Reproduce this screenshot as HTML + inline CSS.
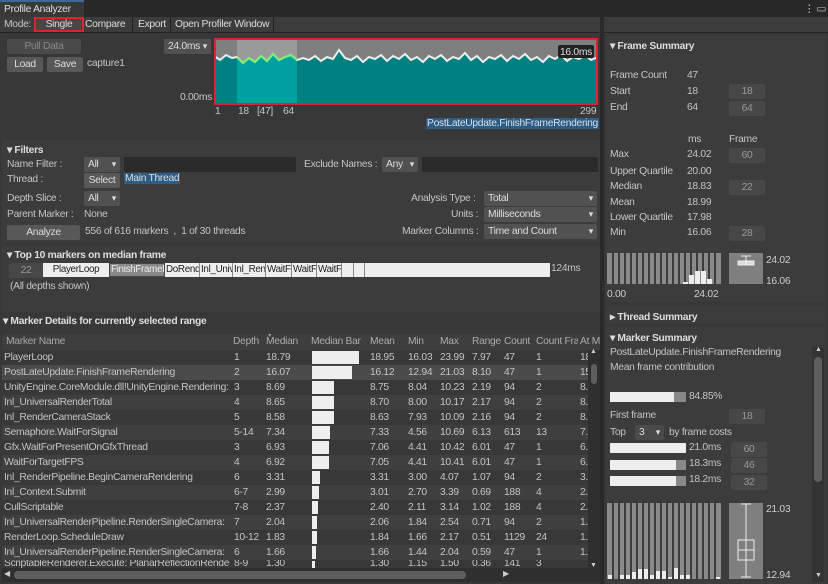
<!DOCTYPE html>
<html><head><meta charset="utf-8"><style>
*{box-sizing:border-box;margin:0;padding:0}
body{width:828px;height:584px;overflow:hidden;background:#383838;font-family:"Liberation Sans",sans-serif;font-size:10.3px;letter-spacing:-0.3px;color:#c4c4c4;position:relative}
.a{position:absolute;white-space:nowrap}
.btn{position:absolute;background:#585858;color:#ddd;text-align:center;border-radius:2px;line-height:15px;height:15px}
.fld{position:absolute;background:#474747;color:#999;text-align:center;border-radius:2px;height:15px;line-height:15px}
.dd{position:absolute;background:#515151;color:#ddd;border-radius:2px;height:15px;line-height:15px;padding-left:4px}
.dd:after{content:"▾";position:absolute;right:4px;font-size:9px}
.inp{position:absolute;background:#2a2a2a;height:15px;border-radius:2px}
.hd{position:absolute;font-weight:bold;color:#ddd}
.row{position:absolute;left:2px;width:586px;height:15px;line-height:15px;overflow:hidden}
.row span{position:absolute}
.bar{position:absolute;background:#eee;height:13px;top:1px}
</style></head><body>
<div class="a" style="left:0;top:0;width:828px;height:17px;background:#282828"></div>
<div class="a" style="left:0;top:2px;width:84px;height:15px;background:#383838;padding-left:4px;line-height:15px;color:#ddd">Profile Analyzer</div>
<div class="a" style="left:0;top:0;width:84px;height:2px;background:#3a6a9a"></div>
<div class="a" style="left:804px;top:3px;color:#ccc">⋮ ▭ ✕</div>
<div class="a" style="left:0;top:17px;width:828px;height:16px;background:#3c3c3c;border-bottom:1px solid #232323"></div>
<div class="a" style="left:4px;top:19px">Mode:</div>
<div class="a" style="left:34px;top:17px;width:50px;height:15px;background:#464646;border:2px solid #e0222a;text-align:center;line-height:11px;color:#ddd">Single</div>
<div class="a" style="left:85px;top:19px;color:#ddd">Compare</div>
<div class="a" style="left:132px;top:17px;width:1px;height:16px;background:#222"></div>
<div class="a" style="left:138px;top:19px;color:#ddd">Export</div>
<div class="a" style="left:170px;top:17px;width:1px;height:16px;background:#222"></div>
<div class="a" style="left:175px;top:19px;color:#ddd">Open Profiler Window</div>
<div class="a" style="left:273px;top:17px;width:1px;height:16px;background:#222"></div>

<div class="btn" style="left:7px;top:39px;width:74px;background:#4a4a4a;color:#888">Pull Data</div>
<div class="btn" style="left:7px;top:57px;width:36px">Load</div>
<div class="btn" style="left:47px;top:57px;width:36px">Save</div>
<div class="a" style="left:87px;top:58px">capture1</div>
<div class="dd" style="left:164px;top:39px;width:47px">24.0ms</div>
<div class="a" style="left:180px;top:92px">0.00ms</div>
<svg class="a" style="left:214px;top:38px" width="384" height="67">
<rect x="0" y="0" width="384" height="67" fill="#008080"/>
<rect x="0" y="0" width="384" height="26" fill="#7f7f7f"/>
<rect x="23" y="0" width="60" height="67" fill="#00a0a0"/>
<rect x="23" y="0" width="60" height="26" fill="#9a9a9a"/>
<polyline fill="#008080" stroke="none" points="0,67 0,18 6,22 12,17 18,20 23,19 29,25 35,20 41,24 47,18 53,23 59,16 65,22 71,19 77,17 83,22 89,20 95,22 101,18 107,23 113,19 119,21 125,12 131,20 137,22 143,18 149,24 155,19 161,21 167,17 173,23 179,18 185,21 191,16 197,22 203,19 209,24 215,18 221,21 227,17 233,23 239,19 245,21 251,15 257,22 263,18 269,24 275,19 281,21 287,17 293,23 299,18 305,21 311,16 317,22 323,19 329,24 335,18 341,21 347,17 353,23 359,19 365,21 371,17 377,22 384,19 384,67"/>
<polygon fill="#00a0a0" points="23,67 23,19 29,25 35,20 41,24 47,18 53,23 59,16 65,22 71,19 77,17 83,22 83,67"/>
<polyline fill="none" stroke="#eee" stroke-width="2" points="0,18 6,22 12,17 18,20 23,19 29,25 35,20 41,24 47,18 53,23 59,16 65,22 71,19 77,17 83,22 89,20 95,22 101,18 107,23 113,19 119,21 125,12 131,20 137,22 143,18 149,24 155,19 161,21 167,17 173,23 179,18 185,21 191,16 197,22 203,19 209,24 215,18 221,21 227,17 233,23 239,19 245,21 251,15 257,22 263,18 269,24 275,19 281,21 287,17 293,23 299,18 305,21 311,16 317,22 323,19 329,24 335,18 341,21 347,17 353,23 359,19 365,21 371,17 377,22 384,19"/>
<polyline fill="none" stroke="#7cf070" stroke-width="2" points="23,19 29,25 35,20 41,24 47,18 53,23 59,16 65,22 71,19 77,17 83,22"/>
<rect x="1" y="1" width="382" height="65" fill="none" stroke="#e0222a" stroke-width="2"/>
<rect x="344" y="7" width="36" height="13" fill="#222" rx="2"/>
<text x="346" y="17" fill="#ddd" font-size="10.3" font-family="Liberation Sans">16.0ms</text>
</svg>
<div class="a" style="left:215px;top:106px">1</div>
<div class="a" style="left:238px;top:106px">18</div>
<div class="a" style="left:257px;top:106px">[47]</div>
<div class="a" style="left:283px;top:106px">64</div>
<div class="a" style="left:580px;top:106px">299</div>
<div class="a" style="left:426px;top:118px;background:#2c5d87;color:#ddd;padding:0 1px">PostLateUpdate.FinishFrameRendering</div>

<div class="a" style="left:2px;top:140px;width:598px;height:102px;background:#3c3c3c"></div>
<div class="hd" style="left:7px;top:144px">▾ Filters</div>
<div class="a" style="left:7px;top:159px">Name Filter :</div>
<div class="dd" style="left:84px;top:157px;width:36px">All</div>
<div class="inp" style="left:124px;top:157px;width:172px"></div>
<div class="a" style="left:304px;top:159px">Exclude Names :</div>
<div class="dd" style="left:382px;top:157px;width:36px">Any</div>
<div class="inp" style="left:422px;top:157px;width:176px"></div>
<div class="a" style="left:7px;top:174px">Thread :</div>
<div class="btn" style="left:84px;top:173px;width:36px">Select</div>
<div class="a" style="left:124px;top:173px;background:#2c5d87;color:#ddd;padding:0 1px">Main Thread</div>
<div class="a" style="left:7px;top:193px">Depth Slice :</div>
<div class="dd" style="left:84px;top:191px;width:36px">All</div>
<div class="a" style="left:411px;top:193px">Analysis Type :</div>
<div class="dd" style="left:484px;top:191px;width:113px">Total</div>
<div class="a" style="left:7px;top:209px">Parent Marker :</div>
<div class="a" style="left:84px;top:209px">None</div>
<div class="a" style="left:451px;top:209px">Units :</div>
<div class="dd" style="left:484px;top:207px;width:113px">Milliseconds</div>
<div class="btn" style="left:7px;top:225px;width:73px">Analyze</div>
<div class="a" style="left:85px;top:226px">556 of 616 markers &nbsp;, &nbsp;1 of 30 threads</div>
<div class="a" style="left:402px;top:226px">Marker Columns :</div>
<div class="dd" style="left:484px;top:224px;width:113px">Time and Count</div>

<div class="a" style="left:2px;top:246px;width:598px;height:66px;background:#3c3c3c"></div>
<div class="hd" style="left:7px;top:249px">▾ Top 10 markers on median frame</div>
<div class="fld" style="left:9px;top:263px;width:34px">22</div>
<div class="a" style="left:43px;top:263px;width:507px;height:14px;background:#eee;color:#222;line-height:14px;font-size:9.8px">
<span class="a" style="left:0;width:66px;text-align:center">PlayerLoop</span>
<span class="a" style="left:66px;width:56px;height:14px;background:#888;color:#eee;border:1px solid #444;padding-left:1px;overflow:hidden;line-height:12px">FinishFrameR</span>
<span class="a" style="left:123px;width:34px;overflow:hidden;border-right:1px solid #888">DoRend</span>
<span class="a" style="left:158px;width:32px;overflow:hidden;border-right:1px solid #888">Inl_Univ</span>
<span class="a" style="left:191px;width:32px;overflow:hidden;border-right:1px solid #888">Inl_Ren</span>
<span class="a" style="left:224px;width:25px;overflow:hidden;border-right:1px solid #888">WaitF</span>
<span class="a" style="left:250px;width:24px;overflow:hidden;border-right:1px solid #888">WaitF</span>
<span class="a" style="left:275px;width:24px;overflow:hidden;border-right:1px solid #888">WaitF</span>
<span class="a" style="left:300px;width:11px;border-right:1px solid #888;height:14px"></span>
<span class="a" style="left:312px;width:10px;border-right:1px solid #888;height:14px"></span>
</div>
<div class="a" style="left:551px;top:263px">124ms</div>
<div class="a" style="left:10px;top:281px">(All depths shown)</div>

<div class="hd" style="left:3px;top:315px">▾ Marker Details for currently selected range</div>
<div class="a" style="left:2px;top:331px;width:598px;height:253px;background:#383838"></div>
<div class="a" style="left:2px;top:334px;width:598px;height:16px;background:#3e3e3e;color:#aaa;line-height:16px;overflow:hidden">
<span class="a" style="left:4px">Marker Name</span>
<span class="a" style="left:231px">Depth</span>
<span class="a" style="left:264px">Median</span><span class="a" style="left:266px;top:-6px;font-size:7px">▾</span>
<span class="a" style="left:309px">Median Bar</span>
<span class="a" style="left:368px">Mean</span>
<span class="a" style="left:406px">Min</span>
<span class="a" style="left:438px">Max</span>
<span class="a" style="left:470px">Range</span>
<span class="a" style="left:502px">Count</span>
<span class="a" style="left:534px;width:42px;overflow:hidden">Count Fra</span>
<span class="a" style="left:578px">At M</span>
</div>
<div class="row" style="top:350px;background:#383838"><span style="left:2px">PlayerLoop</span><span style="left:232px">1</span><span style="left:264px">18.79</span><div class="bar" style="left:310px;width:47px"></div><span style="left:368px">18.95</span><span style="left:406px">16.03</span><span style="left:438px">23.99</span><span style="left:470px">7.97</span><span style="left:502px">47</span><span style="left:534px">1</span><span style="left:578px">18</span></div>
<div class="row" style="top:365px;background:#4b4b4b"><span style="left:2px">PostLateUpdate.FinishFrameRendering</span><span style="left:232px">2</span><span style="left:264px">16.07</span><div class="bar" style="left:310px;width:40px"></div><span style="left:368px">16.12</span><span style="left:406px">12.94</span><span style="left:438px">21.03</span><span style="left:470px">8.10</span><span style="left:502px">47</span><span style="left:534px">1</span><span style="left:578px">15</span></div>
<div class="row" style="top:380px;background:#383838"><span style="left:2px;width:228px;overflow:hidden">UnityEngine.CoreModule.dll!UnityEngine.Rendering:</span><span style="left:232px">3</span><span style="left:264px">8.69</span><div class="bar" style="left:310px;width:22px"></div><span style="left:368px">8.75</span><span style="left:406px">8.04</span><span style="left:438px">10.23</span><span style="left:470px">2.19</span><span style="left:502px">94</span><span style="left:534px">2</span><span style="left:578px">8.</span></div>
<div class="row" style="top:395px;background:#3f3f3f"><span style="left:2px">Inl_UniversalRenderTotal</span><span style="left:232px">4</span><span style="left:264px">8.65</span><div class="bar" style="left:310px;width:22px"></div><span style="left:368px">8.70</span><span style="left:406px">8.00</span><span style="left:438px">10.17</span><span style="left:470px">2.17</span><span style="left:502px">94</span><span style="left:534px">2</span><span style="left:578px">8.</span></div>
<div class="row" style="top:410px;background:#383838"><span style="left:2px">Inl_RenderCameraStack</span><span style="left:232px">5</span><span style="left:264px">8.58</span><div class="bar" style="left:310px;width:22px"></div><span style="left:368px">8.63</span><span style="left:406px">7.93</span><span style="left:438px">10.09</span><span style="left:470px">2.16</span><span style="left:502px">94</span><span style="left:534px">2</span><span style="left:578px">8.</span></div>
<div class="row" style="top:425px;background:#3f3f3f"><span style="left:2px">Semaphore.WaitForSignal</span><span style="left:232px">5-14</span><span style="left:264px">7.34</span><div class="bar" style="left:310px;width:18px"></div><span style="left:368px">7.33</span><span style="left:406px">4.56</span><span style="left:438px">10.69</span><span style="left:470px">6.13</span><span style="left:502px">613</span><span style="left:534px">13</span><span style="left:578px">7.</span></div>
<div class="row" style="top:440px;background:#383838"><span style="left:2px">Gfx.WaitForPresentOnGfxThread</span><span style="left:232px">3</span><span style="left:264px">6.93</span><div class="bar" style="left:310px;width:17px"></div><span style="left:368px">7.06</span><span style="left:406px">4.41</span><span style="left:438px">10.42</span><span style="left:470px">6.01</span><span style="left:502px">47</span><span style="left:534px">1</span><span style="left:578px">6.</span></div>
<div class="row" style="top:455px;background:#3f3f3f"><span style="left:2px">WaitForTargetFPS</span><span style="left:232px">4</span><span style="left:264px">6.92</span><div class="bar" style="left:310px;width:17px"></div><span style="left:368px">7.05</span><span style="left:406px">4.41</span><span style="left:438px">10.41</span><span style="left:470px">6.01</span><span style="left:502px">47</span><span style="left:534px">1</span><span style="left:578px">6.</span></div>
<div class="row" style="top:470px;background:#383838"><span style="left:2px">Inl_RenderPipeline.BeginCameraRendering</span><span style="left:232px">6</span><span style="left:264px">3.31</span><div class="bar" style="left:310px;width:8px"></div><span style="left:368px">3.31</span><span style="left:406px">3.00</span><span style="left:438px">4.07</span><span style="left:470px">1.07</span><span style="left:502px">94</span><span style="left:534px">2</span><span style="left:578px">3.</span></div>
<div class="row" style="top:485px;background:#3f3f3f"><span style="left:2px">Inl_Context.Submit</span><span style="left:232px">6-7</span><span style="left:264px">2.99</span><div class="bar" style="left:310px;width:7px"></div><span style="left:368px">3.01</span><span style="left:406px">2.70</span><span style="left:438px">3.39</span><span style="left:470px">0.69</span><span style="left:502px">188</span><span style="left:534px">4</span><span style="left:578px">2.</span></div>
<div class="row" style="top:500px;background:#383838"><span style="left:2px">CullScriptable</span><span style="left:232px">7-8</span><span style="left:264px">2.37</span><div class="bar" style="left:310px;width:6px"></div><span style="left:368px">2.40</span><span style="left:406px">2.11</span><span style="left:438px">3.14</span><span style="left:470px">1.02</span><span style="left:502px">188</span><span style="left:534px">4</span><span style="left:578px">2.</span></div>
<div class="row" style="top:515px;background:#3f3f3f"><span style="left:2px;width:228px;overflow:hidden">Inl_UniversalRenderPipeline.RenderSingleCamera: P</span><span style="left:232px">7</span><span style="left:264px">2.04</span><div class="bar" style="left:310px;width:5px"></div><span style="left:368px">2.06</span><span style="left:406px">1.84</span><span style="left:438px">2.54</span><span style="left:470px">0.71</span><span style="left:502px">94</span><span style="left:534px">2</span><span style="left:578px">1.</span></div>
<div class="row" style="top:530px;background:#383838"><span style="left:2px">RenderLoop.ScheduleDraw</span><span style="left:232px">10-12</span><span style="left:264px">1.83</span><div class="bar" style="left:310px;width:5px"></div><span style="left:368px">1.84</span><span style="left:406px">1.66</span><span style="left:438px">2.17</span><span style="left:470px">0.51</span><span style="left:502px">1129</span><span style="left:534px">24</span><span style="left:578px">1.</span></div>
<div class="row" style="top:545px;background:#3f3f3f"><span style="left:2px;width:228px;overflow:hidden">Inl_UniversalRenderPipeline.RenderSingleCamera: M</span><span style="left:232px">6</span><span style="left:264px">1.66</span><div class="bar" style="left:310px;width:4px"></div><span style="left:368px">1.66</span><span style="left:406px">1.44</span><span style="left:438px">2.04</span><span style="left:470px">0.59</span><span style="left:502px">47</span><span style="left:534px">1</span><span style="left:578px">1.</span></div>
<div class="row" style="top:560px;background:#383838;height:8px"><span style="left:2px;top:-4px;width:228px;overflow:hidden">ScriptableRenderer.Execute: PlanarReflectionRende</span><span style="left:232px;top:-4px">8-9</span><span style="left:264px;top:-4px">1.30</span><div class="bar" style="left:310px;width:3px"></div><span style="left:368px;top:-4px">1.30</span><span style="left:406px;top:-4px">1.15</span><span style="left:438px;top:-4px">1.50</span><span style="left:470px;top:-4px">0.36</span><span style="left:502px;top:-4px">141</span><span style="left:534px;top:-4px">3</span></div>
<div class="a" style="left:588px;top:350px;width:12px;height:218px;background:#2f2f2f"></div>
<div class="a" style="left:591px;top:364px;width:6px;height:20px;background:#5e5e5e;border-radius:3px"></div>
<div class="a" style="left:590px;top:348px;font-size:7px;color:#ccc">▲</div>
<div class="a" style="left:590px;top:562px;font-size:7px;color:#ccc">▼</div>
<div class="a" style="left:2px;top:568px;width:598px;height:14px;background:#2f2f2f"></div>
<div class="a" style="left:14px;top:571px;width:452px;height:8px;background:#5e5e5e;border-radius:4px"></div>
<div class="a" style="left:4px;top:569px;font-size:8px;color:#ccc">◀</div>
<div class="a" style="left:503px;top:569px;font-size:8px;color:#ccc">▶</div>
<div class="a" style="left:600px;top:17px;width:4px;height:567px;background:#2a2a2a"></div>

<div class="a" style="left:606px;top:36px;width:220px;height:266px;background:#3c3c3c"></div>
<div class="hd" style="left:610px;top:40px">▾ Frame Summary</div>
<div class="a" style="left:610px;top:70px">Frame Count</div><div class="a" style="left:687px;top:70px">47</div>
<div class="a" style="left:610px;top:86px">Start</div><div class="a" style="left:687px;top:86px">18</div><div class="fld" style="left:729px;top:84px;width:36px">18</div>
<div class="a" style="left:610px;top:102px">End</div><div class="a" style="left:687px;top:102px">64</div><div class="fld" style="left:729px;top:101px;width:36px">64</div>
<div class="a" style="left:688px;top:134px">ms</div><div class="a" style="left:729px;top:134px">Frame</div>
<div class="a" style="left:610px;top:149px">Max</div><div class="a" style="left:687px;top:149px">24.02</div><div class="fld" style="left:729px;top:148px;width:36px">60</div>
<div class="a" style="left:610px;top:166px">Upper Quartile</div><div class="a" style="left:687px;top:166px">20.00</div>
<div class="a" style="left:610px;top:181px">Median</div><div class="a" style="left:687px;top:181px">18.83</div><div class="fld" style="left:729px;top:180px;width:36px">22</div>
<div class="a" style="left:610px;top:197px">Mean</div><div class="a" style="left:687px;top:197px">18.99</div>
<div class="a" style="left:610px;top:212px">Lower Quartile</div><div class="a" style="left:687px;top:212px">17.98</div>
<div class="a" style="left:610px;top:227px">Min</div><div class="a" style="left:687px;top:227px">16.06</div><div class="fld" style="left:729px;top:226px;width:36px">28</div>
<svg class="a" style="left:607px;top:253px" width="215" height="50">
<rect x="0" y="0" width="114" height="31" fill="#8a8a8a"/>
<g stroke="#3c3c3c" stroke-width="2"><path d="M6,0V31M12,0V31M18,0V31M24,0V31M30,0V31M36,0V31M42,0V31M48,0V31M54,0V31M60,0V31M66,0V31M72,0V31M78,0V31M84,0V31M90,0V31M96,0V31M102,0V31M108,0V31"/></g>
<g fill="#eee"><rect x="76" y="29" width="5" height="2"/><rect x="82" y="22" width="5" height="9"/><rect x="88" y="18" width="5" height="13"/><rect x="94" y="18" width="5" height="13"/><rect x="100" y="26" width="5" height="5"/></g>
<rect x="122" y="0" width="34" height="31" fill="#7f7f7f"/>
<path d="M139,3V12M134,3H144M131,8H147V12H131Z" stroke="#eee" fill="#ddd" stroke-width="1"/>
<text x="159" y="10" fill="#ccc" font-size="10.3" font-family="Liberation Sans">24.02</text>
<text x="159" y="31" fill="#ccc" font-size="10.3" font-family="Liberation Sans">16.06</text>
<text x="0" y="44" fill="#ccc" font-size="10.3" font-family="Liberation Sans">0.00</text>
<text x="87" y="44" fill="#ccc" font-size="10.3" font-family="Liberation Sans">24.02</text>
</svg>
<div class="a" style="left:606px;top:306px;width:220px;height:18px;background:#3c3c3c"></div>
<div class="hd" style="left:610px;top:311px">▸ Thread Summary</div>
<div class="a" style="left:606px;top:327px;width:220px;height:257px;background:#3c3c3c"></div>
<div class="hd" style="left:610px;top:332px">▾ Marker Summary</div>
<div class="a" style="left:610px;top:347px">PostLateUpdate.FinishFrameRendering</div>
<div class="a" style="left:610px;top:362px">Mean frame contribution</div>
<div class="a" style="left:610px;top:392px;width:76px;height:10px;background:#888"></div>
<div class="a" style="left:610px;top:392px;width:64px;height:10px;background:#eee"></div>
<div class="a" style="left:689px;top:391px">84.85%</div>
<div class="a" style="left:610px;top:410px">First frame</div><div class="fld" style="left:729px;top:409px;width:36px">18</div>
<div class="a" style="left:610px;top:427px">Top</div>
<div class="dd" style="left:635px;top:425px;width:29px;background:#4a4a4a">3</div>
<div class="a" style="left:669px;top:427px">by frame costs</div>
<div class="a" style="left:610px;top:443px;width:76px;height:10px;background:#eee"></div><div class="a" style="left:689px;top:442px">21.0ms</div><div class="fld" style="left:731px;top:442px;width:36px">60</div>
<div class="a" style="left:610px;top:460px;width:76px;height:10px;background:#888"></div><div class="a" style="left:610px;top:460px;width:66px;height:10px;background:#eee"></div><div class="a" style="left:689px;top:458px">18.3ms</div><div class="fld" style="left:731px;top:458px;width:36px">46</div>
<div class="a" style="left:610px;top:476px;width:76px;height:10px;background:#888"></div><div class="a" style="left:610px;top:476px;width:66px;height:10px;background:#eee"></div><div class="a" style="left:689px;top:474px">18.2ms</div><div class="fld" style="left:731px;top:475px;width:36px">32</div>
<svg class="a" style="left:607px;top:503px" width="210" height="78">
<rect x="0" y="0" width="114" height="76" fill="#8a8a8a"/>
<g stroke="#3c3c3c" stroke-width="2"><path d="M6,0V76M12,0V76M18,0V76M24,0V76M30,0V76M36,0V76M42,0V76M48,0V76M54,0V76M60,0V76M66,0V76M72,0V76M78,0V76M84,0V76M90,0V76M96,0V76M102,0V76M108,0V76"/></g>
<g fill="#eee"><rect x="1" y="72" width="4" height="4"/><rect x="13" y="72" width="4" height="4"/><rect x="19" y="72" width="4" height="4"/><rect x="25" y="69" width="4" height="7"/><rect x="31" y="66" width="4" height="10"/><rect x="37" y="66" width="4" height="10"/><rect x="43" y="72" width="4" height="4"/><rect x="49" y="68" width="4" height="8"/><rect x="55" y="68" width="4" height="8"/><rect x="61" y="74" width="4" height="2"/><rect x="67" y="65" width="4" height="11"/><rect x="73" y="72" width="4" height="4"/><rect x="79" y="72" width="4" height="4"/><rect x="109" y="74" width="4" height="2"/></g>
<rect x="122" y="0" width="34" height="76" fill="#7f7f7f"/>
<path d="M139,1V74M134,1H144M134,74H144M131,37H147V57H131ZM131,47H147" stroke="#eee" fill="none" stroke-width="1"/>
<text x="159" y="9" fill="#ccc" font-size="10.3" font-family="Liberation Sans">21.03</text>
<text x="159" y="75" fill="#ccc" font-size="10.3" font-family="Liberation Sans">12.94</text>
</svg>
<div class="a" style="left:812px;top:347px;width:12px;height:235px;background:#333"></div>
<div class="a" style="left:814px;top:357px;width:8px;height:125px;background:#5e5e5e;border-radius:4px"></div>
<div class="a" style="left:815px;top:346px;font-size:7px;color:#ccc">▲</div>
<div class="a" style="left:815px;top:572px;font-size:7px;color:#ccc">▼</div>
</body></html>
